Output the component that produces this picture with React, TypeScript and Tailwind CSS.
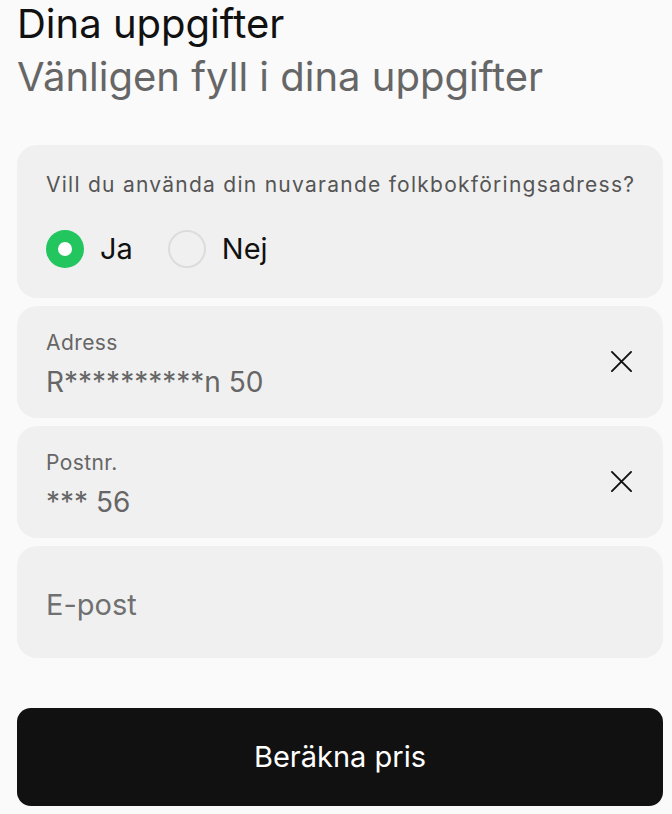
import { useState } from 'react'

const font = { fontFamily: 'Inter, "Noto Sans", sans-serif' }

function ClearIcon() {
  return (
    <svg width="23" height="23" viewBox="0 0 24 24" fill="none" stroke="#111" strokeWidth="2" strokeLinecap="round">
      <path d="M2 2 L22 22 M22 2 L2 22" />
    </svg>
  )
}

function Radio({ checked, label, onClick }: { checked: boolean; label: string; onClick: () => void }) {
  return (
    <button onClick={onClick} className="flex items-center gap-4">
      {checked ? (
        <span className="flex h-[38px] w-[38px] items-center justify-center rounded-full bg-[#22c55e]">
          <span className="h-[14px] w-[14px] rounded-full bg-white" />
        </span>
      ) : (
        <span className="h-[38px] w-[38px] rounded-full border-2 border-[#dcdcdc]" />
      )}
      <span className="text-[29px] text-[#111]">{label}</span>
    </button>
  )
}

function FilledField({ label, value }: { label: string; value: string }) {
  return (
    <div className="flex h-[112px] items-center justify-between rounded-[20px] bg-[#f0f0f0] pl-[29px] pr-[30px]">
      <div className="flex flex-col pt-[5px]">
        <span className="text-[21px] leading-[28px] tracking-[0.02em] text-[#666]">{label}</span>
        <span className="mt-[8px] text-[28px] leading-[34px] text-[#666]">{value}</span>
      </div>
      <ClearIcon />
    </div>
  )
}

export default function App() {
  const [useAddress, setUseAddress] = useState(true)

  return (
    <div className="min-h-[814px] bg-[#fafafa] pl-[17px] pr-[9px] pb-[9px]" style={font}>
      <h1 className="text-[40px] leading-[48px] text-[#111]">Dina uppgifter</h1>
      <p className="mt-[5px] text-[40px] leading-[48px] text-[#666]">Vänligen fyll i dina uppgifter</p>

      <div className="mt-[44px] flex flex-col gap-[8px]">
        <div className="rounded-[20px] bg-[#f0f0f0] px-[29px] pt-[26px] pb-[27px]">
          <p className="whitespace-nowrap text-[21px] leading-[28px] tracking-[0.06em] text-[#555]">
            Vill du använda din nuvarande folkbokföringsadress?
          </p>
          <div className="mt-[28px] flex items-center gap-[35px]">
            <Radio checked={useAddress} label="Ja" onClick={() => setUseAddress(true)} />
            <Radio checked={!useAddress} label="Nej" onClick={() => setUseAddress(false)} />
          </div>
        </div>

        <FilledField label="Adress" value="R**********n 50" />
        <FilledField label="Postnr." value="*** 56" />

        <div className="flex h-[112px] items-center rounded-[20px] bg-[#f0f0f0] px-[29px] pt-[6px]">
          <span className="text-[29px] text-[#707070]">E-post</span>
        </div>
      </div>

      <button className="mt-[50px] flex h-[98px] w-full items-center justify-center rounded-[14px] bg-[#111] text-[29px] text-white">
        Beräkna pris
      </button>
    </div>
  )
}
